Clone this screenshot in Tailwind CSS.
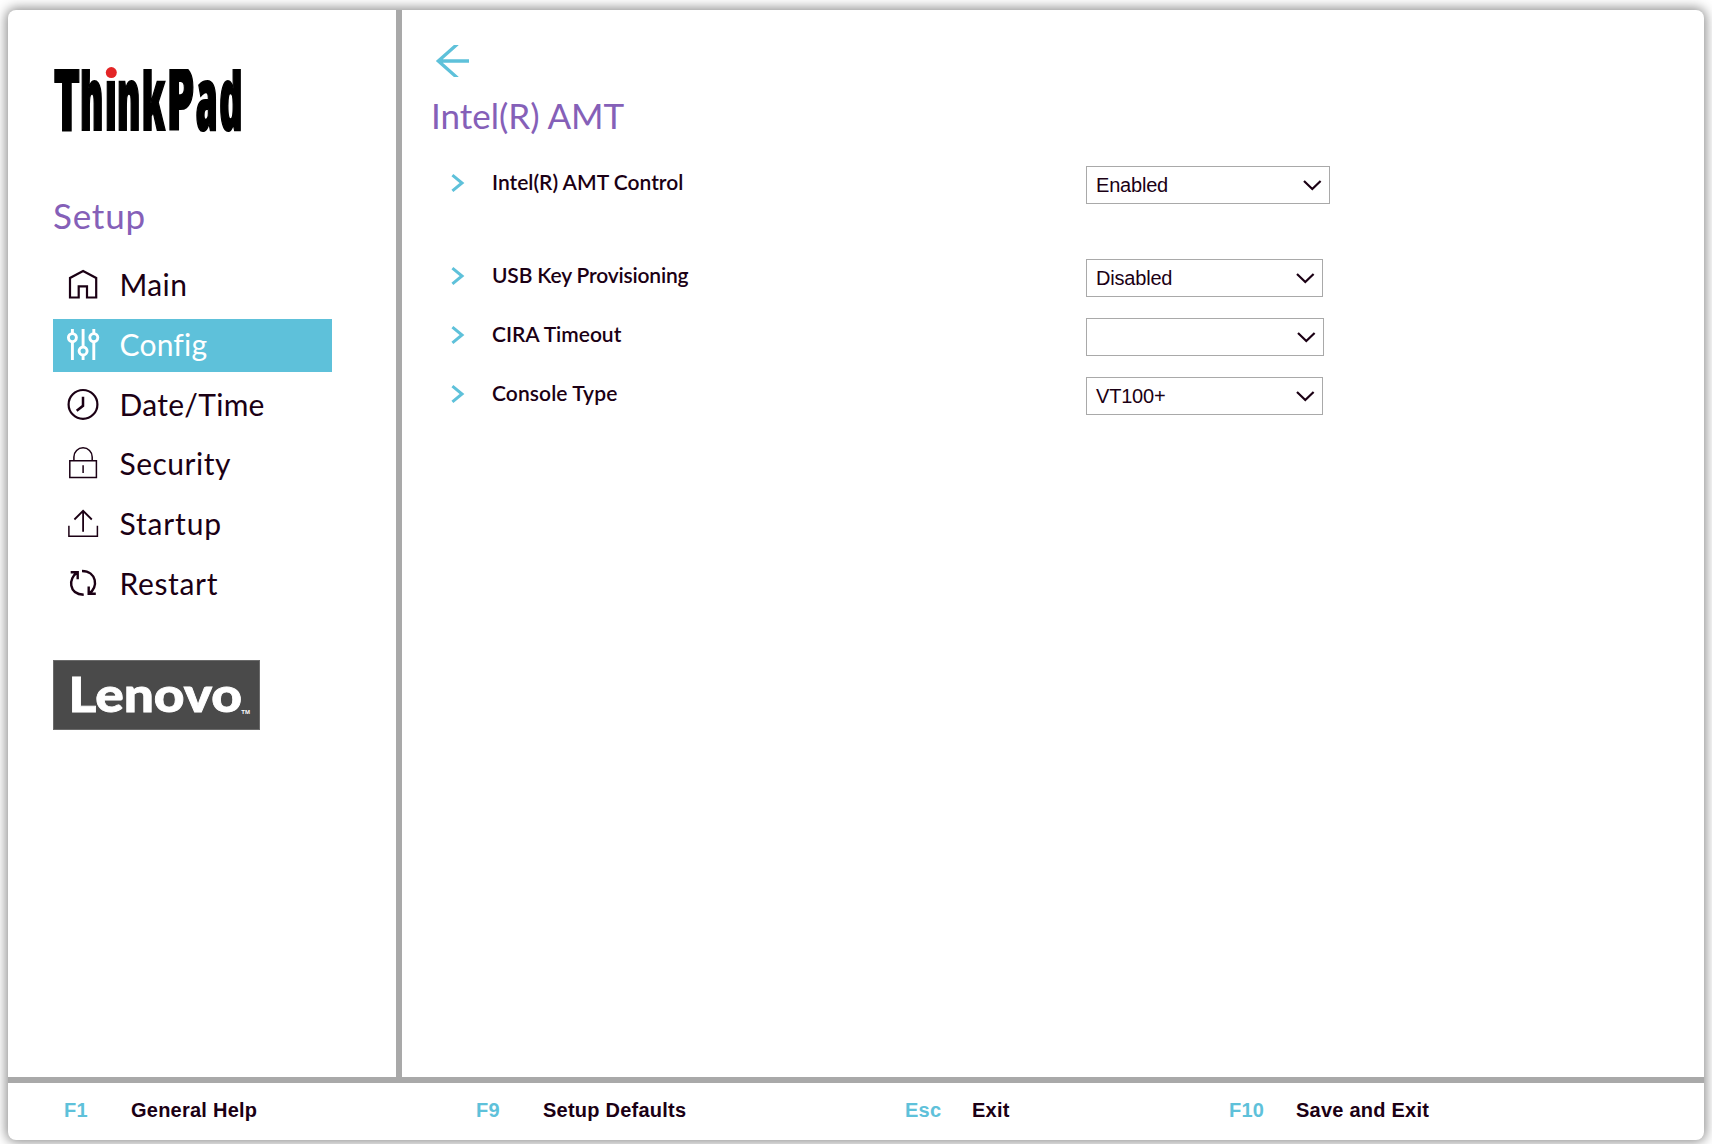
<!DOCTYPE html>
<html lang="en">
<head>
<meta charset="utf-8">
<title>ThinkPad Setup</title>
<script src="https://cdn.jsdelivr.net/npm/@tailwindcss/browser@4"></script>
</head>
<body class="bg-white h-screen overflow-hidden pt-[10px] pl-2 pr-2 pb-1 font-[Lato,sans-serif] text-[#1b0014]">
<div class="flex h-full flex-col overflow-hidden rounded-lg bg-white shadow-[0_0_12px_2px_rgba(0,0,0,0.45)]">
  <div class="flex flex-1">
    <!-- Sidebar -->
    <aside class="w-[388px] shrink-0 pl-[45px] pt-[50px]">
      <svg class="block overflow-visible" width="200" height="80" viewBox="0 0 200 80" aria-label="ThinkPad">
        <g transform="scale(.51 1)">
          <text class="font-['Open_Sans'] font-extrabold [font-stretch:75%] text-[87px]" fill="#000" stroke="#000" stroke-width="2.2" y="70" x="1.4 53 102 125.5 174 222.5 280 326"><tspan class="[font-stretch:100%]">T</tspan>hink<tspan class="[font-stretch:98%]">P</tspan><tspan class="[font-stretch:86%]">a</tspan><tspan class="[font-stretch:80%]">d</tspan></text>
        </g>
        <path d="M-4 -4H196V9H-4ZM52.500 6H64.200V20.500H52.500Z" fill="#fff"/>
        <circle cx="58.3" cy="12.6" r="5.5" fill="#e32526"/>
      </svg>
      <h2 class="mt-[55px] text-[35px] leading-10 font-normal tracking-[0.8px] text-[#8560b8]">Setup</h2>
      <nav class="mt-6 flex w-[279px] flex-col gap-[6.8px] text-[30px] font-normal tracking-[0.4px]">
        <a class="flex h-[53px] pl-3">
          <svg width="36" height="53" viewBox="0 0 36 53" fill="none" stroke="currentColor" stroke-width="2.2"><path d="M5 38.5V19L18.1 12 31.2 19V38.5H22V27.400H13.700V38.500Z"/></svg>
          <span class="ml-[18.5px] leading-[51px]">Main</span>
        </a>
        <a class="flex h-[53px] bg-[#5ec1da] pl-3 text-white">
          <svg width="36" height="53" viewBox="0 0 36 53" fill="none" stroke="currentColor" stroke-width="2.9"><path d="M7.4 10V14.5M7.4 22.7V41M18.1 10V28M18.1 36V41M28.8 10V14.5M28.8 22.7V41"/><circle cx="7.4" cy="18.6" r="4"/><circle cx="18.1" cy="32" r="4"/><circle cx="28.8" cy="18.6" r="4"/></svg>
          <span class="ml-[18.5px] leading-[51px] tracking-[0.2px]">Config</span>
        </a>
        <a class="flex h-[53px] pl-3">
          <svg width="36" height="53" viewBox="0 0 36 53" fill="none" stroke="currentColor" stroke-width="2.2"><circle cx="18" cy="25.400" r="14.400"/><path d="M18 17.800V26.800L11.700 31.800" stroke-width="2.500"/></svg>
          <span class="ml-[18.5px] leading-[51px] tracking-[0.3px]">Date/Time</span>
        </a>
        <a class="flex h-[53px] pl-3">
          <svg width="36" height="53" viewBox="0 0 36 53" fill="none" stroke="currentColor" stroke-width="1.5"><path d="M4.800 22.800H31.400V39.600H4.800ZM8.900 22.800V19A9.150 9.150 0 0 1 27.200 19V22.800M18.100 27.300V35"/></svg>
          <span class="ml-[18.5px] leading-[51px] tracking-[0.5px]">Security</span>
        </a>
        <a class="flex h-[53px] pl-3">
          <svg width="36" height="53" viewBox="0 0 36 53" fill="none" stroke="currentColor" stroke-width="1.5"><path d="M3.900 27.800V38.200H32.400V27.800"/><path d="M18.100 12.500V33.800M9.400 21.500L18.100 12.800 26.800 21.500" stroke-width="1.800"/></svg>
          <span class="ml-[18.5px] leading-[51px] tracking-[0.85px]">Startup</span>
        </a>
        <a class="flex h-[53px] pl-3">
          <svg width="36" height="53" viewBox="0 0 36 53" fill="none" stroke="currentColor" stroke-width="2.400"><path d="M5.700 14.200H12.700V21.200M12.500 14.400C3 20 3.400 36.200 18.700 36.700M17 13C31.500 13 34 29.500 23.900 35.700M23.700 28.500V35.800H30.800"/></svg>
          <span class="ml-[18.5px] leading-[51px] tracking-[0.65px]">Restart</span>
        </a>
      </nav>
      <svg class="mt-[49px] block" width="207" height="70" viewBox="0 0 207 70" aria-label="Lenovo">
        <rect x=".5" y=".5" width="206" height="69" fill="#4a4a4a" stroke="#6a6a6a"/>
        <text class="font-[Lato] font-black text-[48px]" fill="#fff" stroke="#fff" stroke-width=".8" x="15.500" y="52" textLength="173.500" lengthAdjust="spacingAndGlyphs">Lenovo</text>
        <text class="font-['Liberation_Sans'] font-bold text-[6px]" fill="#fff" x="188.300" y="53.500">TM</text>
      </svg>
    </aside>
    <div class="w-[6px] bg-[#a9a9a9]"></div>
    <!-- Settings -->
    <main class="flex-1 pl-[29px] pt-[35px]">
      <svg class="block" width="40" height="32" viewBox="0 0 40 32" fill="none" stroke="#5ec1da" stroke-width="3.300"><path d="M38 16H7M26.500 -1L7.300 16 26.500 33"/></svg>
      <h1 class="mt-[18px] text-[35px] leading-10 font-normal text-[#8560b8]">Intel(R) AMT</h1>
      <div class="mt-[31px] grid grid-cols-[61px_594px_auto] items-start justify-start gap-y-[21px] text-[21px] leading-6 font-semibold">
        <svg class="ml-[20px] mt-[7px]" width="14" height="20" viewBox="0 0 14 20" fill="none" stroke="#5ec1da" stroke-width="3"><path d="M1.400 2.200L11 10 1.400 17.800"/></svg>
        <div class="pt-1">Intel(R) AMT Control</div>
        <div class="mb-[34px] flex h-[38px] w-[244px] items-center justify-between border border-[#a9a9a9] pl-[9px] pr-[7px] font-['Liberation_Sans'] text-xl font-normal tracking-[-0.2px]">Enabled<svg width="20" height="12" viewBox="0 0 20 12" fill="none" stroke="currentColor" stroke-width="2.200"><path d="M2 2L10.300 10 18.600 2"/></svg></div>

        <svg class="ml-[20px] mt-[7px]" width="14" height="20" viewBox="0 0 14 20" fill="none" stroke="#5ec1da" stroke-width="3"><path d="M1.400 2.200L11 10 1.400 17.800"/></svg>
        <div class="pt-1 tracking-[-0.17px]">USB Key Provisioning</div>
        <div class="flex h-[38px] w-[237px] items-center justify-between border border-[#a9a9a9] pl-[9px] pr-[7px] font-['Liberation_Sans'] text-xl font-normal tracking-[-0.2px]">Disabled<svg width="20" height="12" viewBox="0 0 20 12" fill="none" stroke="currentColor" stroke-width="2.200"><path d="M2 2L10.300 10 18.600 2"/></svg></div>

        <svg class="ml-[20px] mt-[7px]" width="14" height="20" viewBox="0 0 14 20" fill="none" stroke="#5ec1da" stroke-width="3"><path d="M1.400 2.200L11 10 1.400 17.800"/></svg>
        <div class="pt-1">CIRA Timeout</div>
        <div class="flex h-[38px] w-[238px] items-center justify-end border border-[#a9a9a9] pr-[7px]"><svg width="20" height="12" viewBox="0 0 20 12" fill="none" stroke="currentColor" stroke-width="2.200"><path d="M2 2L10.300 10 18.600 2"/></svg></div>

        <svg class="ml-[20px] mt-[7px]" width="14" height="20" viewBox="0 0 14 20" fill="none" stroke="#5ec1da" stroke-width="3"><path d="M1.400 2.200L11 10 1.400 17.800"/></svg>
        <div class="pt-1 tracking-[0.1px]">Console Type</div>
        <div class="flex h-[38px] w-[237px] items-center justify-between border border-[#a9a9a9] pl-[9px] pr-[7px] font-['Liberation_Sans'] text-xl font-normal tracking-[-0.2px]">VT100+<svg width="20" height="12" viewBox="0 0 20 12" fill="none" stroke="currentColor" stroke-width="2.200"><path d="M2 2L10.300 10 18.600 2"/></svg></div>
      </div>
    </main>
  </div>
  <!-- Key hints -->
  <footer class="flex h-[63px] shrink-0 items-center border-t-[6px] border-[#a9a9a9] pb-1 pl-14 font-['Liberation_Sans'] text-xl leading-6 font-bold tracking-[0.24px]">
    <span class="w-[67px] text-[#5ec1da]">F1</span><span class="w-[345px]">General Help</span>
    <span class="w-[67px] text-[#5ec1da]">F9</span><span class="w-[362px]">Setup Defaults</span>
    <span class="w-[67px] text-[#5ec1da]">Esc</span><span class="w-[257px]">Exit</span>
    <span class="w-[67px] text-[#5ec1da]">F10</span><span>Save and Exit</span>
  </footer>
</div>
</body>
</html>
